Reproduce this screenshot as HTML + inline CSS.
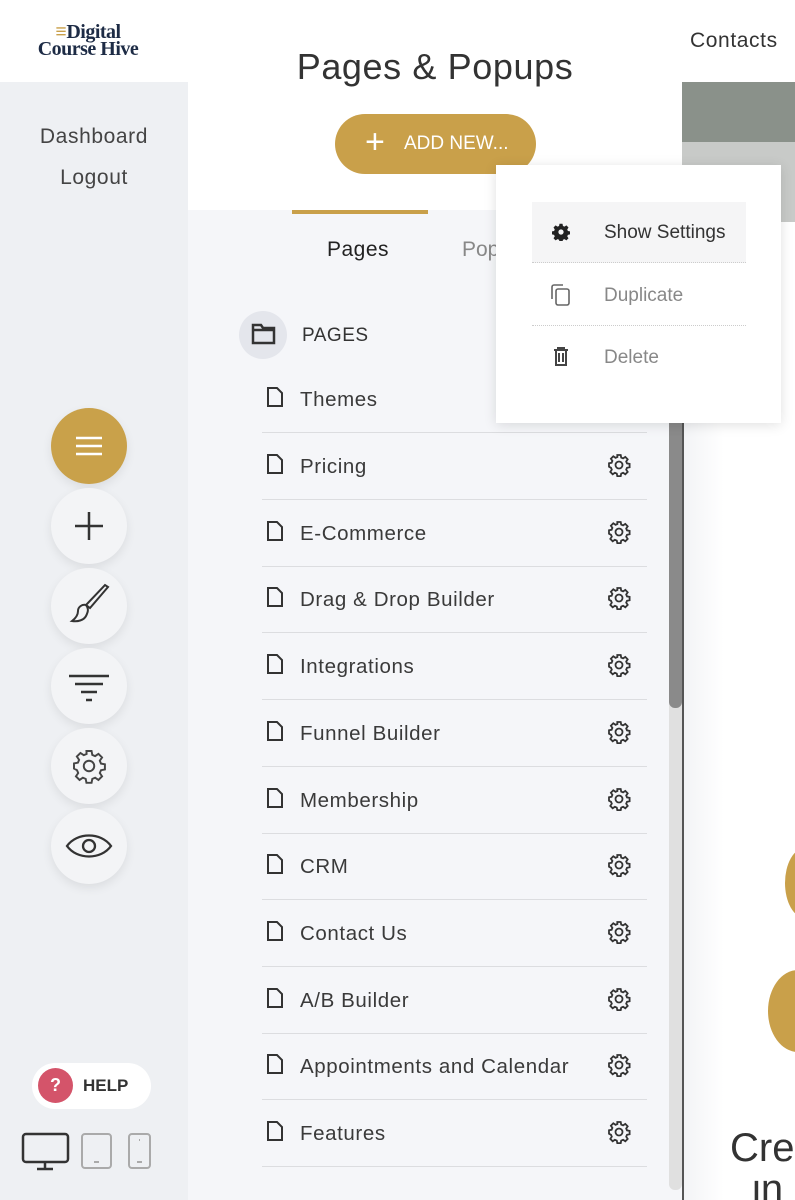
<!DOCTYPE html>
<html><head><style>
*{margin:0;padding:0;box-sizing:border-box}
html,body{width:795px;height:1200px;overflow:hidden}
body{position:relative;background:#fff;font-family:"Liberation Sans",sans-serif;color:#333}
.a{position:absolute}
.row{position:absolute;left:262px;width:385px;height:67px;border-bottom:1px solid #dcdde0}
.row span{position:absolute;left:38px;top:22px;font-size:20.5px;letter-spacing:0.6px;color:#3a3a3a}
.row .doc{position:absolute;left:4px;top:21px}
.row .g{position:absolute;left:345px;top:20px}
.circ{position:absolute;left:51px;width:76px;height:76px;border-radius:50%;background:#f3f4f6;box-shadow:0 4px 10px rgba(0,0,0,.08);display:flex;align-items:center;justify-content:center}
</style></head><body>
<div class="a" style="left:0;top:0;width:188px;height:82px;background:#fff"></div>
<div class="a" style="left:0;top:82px;width:188px;height:1118px;background:#eef0f3"></div>
<div class="a" style="left:26px;top:24px;width:124px;text-align:center;font-family:'Liberation Serif',serif;font-weight:bold;color:#1d2b45;font-size:20px;line-height:17px;letter-spacing:-0.5px"><span style="color:#c9a04a">≡</span>Digital<br>Course Hive</div>
<div class="a" style="left:0;top:116px;width:188px;text-align:center;font-size:21px;letter-spacing:0.6px;color:#444;line-height:41px">Dashboard<br>Logout</div>
<div class="circ" style="top:408px;background:#c9a14a"><svg width="30" height="24"><path d="M2 4h26M2 12h26M2 20h26" stroke="#fff" stroke-width="2.5"/></svg></div>
<div class="circ" style="top:488px"><svg width="32" height="32"><path d="M16 2v28M2 16h28" stroke="#333" stroke-width="2.5"/></svg></div>
<div class="circ" style="top:568px"><svg width="48" height="48" viewBox="0 0 48 48" fill="none" stroke="#333" stroke-width="2"><path d="M43 5 25 26l-4-3L40 3z"/><path d="M21 23c-4-1-8 2-8 6s-2 7-6 10c6 1 12-1 14-5s3-7 0-11"/></svg></div>
<div class="circ" style="top:648px"><svg width="44" height="32"><path d="M2 6h40M8 14h28M14 22h16M19 30h6" stroke="#333" stroke-width="2.5"/></svg></div>
<div class="circ" style="top:728px"><svg width="36" height="36" viewBox="0 0 24 24" fill="none" stroke="#444" stroke-width="1.3"><circle cx="12" cy="12" r="3.5"/><path d="M10.3 2h3.4l.5 2.6 1.9.8 2.2-1.5 2.4 2.4-1.5 2.2.8 1.9 2.6.5v3.4l-2.6.5-.8 1.9 1.5 2.2-2.4 2.4-2.2-1.5-1.9.8-.5 2.6h-3.4l-.5-2.6-1.9-.8-2.2 1.5-2.4-2.4 1.5-2.2-.8-1.9L2 13.7v-3.4l2.6-.5.8-1.9-1.5-2.2 2.4-2.4 2.2 1.5 1.9-.8z"/></svg></div>
<div class="circ" style="top:808px"><svg width="48" height="30" viewBox="0 0 48 30" fill="none" stroke="#333" stroke-width="2.3"><path d="M2 15C12 1 36 1 46 15 36 29 12 29 2 15z"/><circle cx="24" cy="15" r="6"/></svg></div>
<div class="a" style="left:32px;top:1063px;width:119px;height:46px;border-radius:23px;background:#fff"></div>
<div class="a" style="left:38px;top:1068px;width:35px;height:35px;border-radius:50%;background:#d4546a;color:#fff;font-weight:bold;font-size:18px;text-align:center;line-height:35px">?</div>
<div class="a" style="left:83px;top:1076px;font-weight:bold;font-size:17px;color:#333">HELP</div>
<svg class="a" style="left:20px;top:1132px" width="135" height="40" fill="none"><rect x="3" y="2" width="45" height="28" rx="3" stroke="#333" stroke-width="2.5"/><path d="M25 30v6M17 37h16" stroke="#333" stroke-width="2.5"/><rect x="62" y="2" width="29" height="34" rx="3" stroke="#aaa" stroke-width="2"/><path d="M74 30h5" stroke="#aaa" stroke-width="2"/><rect x="109" y="2" width="21" height="34" rx="3" stroke="#aaa" stroke-width="2"/><path d="M117 30h5M119 8h1" stroke="#aaa" stroke-width="2"/></svg>

<div class="a" style="left:188px;top:0;width:494px;height:210px;background:#fff"></div>
<div class="a" style="left:188px;top:210px;width:494px;height:990px;background:#f5f6f9"></div>
<div class="a" style="left:188px;top:46px;width:494px;text-align:center;font-size:36px;letter-spacing:0.6px;color:#333">Pages &amp; Popups</div>
<div class="a" style="left:335px;top:114px;width:201px;height:60px;border-radius:30px;background:#c9a04a;color:#fff;font-size:19px;line-height:60px"><span style="font-size:34px;position:absolute;left:30px;top:-2px">+</span><span style="position:absolute;left:69px">ADD NEW...</span></div>
<div class="a" style="left:292px;top:210px;width:136px;height:4px;background:#c9a04a"></div>
<div class="a" style="left:327px;top:238px;font-size:21px;letter-spacing:0.5px;color:#222">Pages</div>
<div class="a" style="left:462px;top:238px;font-size:21px;color:#888">Pop</div>
<div class="a" style="left:239px;top:311px;width:48px;height:48px;border-radius:50%;background:#e4e6ec"></div>
<svg class="a" style="left:251px;top:323px" width="25" height="22" fill="none" stroke="#333" stroke-width="2.5"><path d="M2 2h8l2 3h11v15H2z"/><path d="M2 7h21"/></svg>
<div class="a" style="left:302px;top:325px;font-size:19px;letter-spacing:0.5px;color:#333">PAGES</div>

<div class="row" style="top:366px"><svg class="doc" width="18" height="20" fill="none" stroke="#333" stroke-width="2"><path d="M2 1h9l5 5v13H2z"/></svg><span>Themes</span></div>
<div id="rows"></div>
<script>
var n=["Pricing","E-Commerce","Drag & Drop Builder","Integrations","Funnel Builder","Membership","CRM","Contact Us","A/B Builder","Appointments and Calendar","Features"];
var h="";n.forEach(function(t,i){var y=433+i*66.7;h+='<div class="row" style="top:'+y+'px"><svg class="doc" width="18" height="20" fill="none" stroke="#333" stroke-width="2"><path d="M2 1h9l5 5v13H2z"/></svg><span>'+t.replace("&","&amp;")+'</span><svg class="g" width="24" height="24" viewBox="0 0 24 24" fill="none" stroke="#333" stroke-width="1.8"><circle cx="12" cy="12" r="3.5"/><path d="M10.3 2h3.4l.5 2.6 1.9.8 2.2-1.5 2.4 2.4-1.5 2.2.8 1.9 2.6.5v3.4l-2.6.5-.8 1.9 1.5 2.2-2.4 2.4-2.2-1.5-1.9.8-.5 2.6h-3.4l-.5-2.6-1.9-.8-2.2 1.5-2.4-2.4 1.5-2.2-.8-1.9L2 13.7v-3.4l2.6-.5.8-1.9-1.5-2.2 2.4-2.4 2.2 1.5 1.9-.8z"/></svg></div>'});
document.getElementById("rows").innerHTML=h;
</script>
<div class="a" style="left:669px;top:410px;width:13px;height:780px;background:#e0e0e0;border-radius:6px"></div>
<div class="a" style="left:669px;top:405px;width:13px;height:303px;background:#8a8a8a;border-radius:0 0 6px 6px"></div>
<div class="a" style="left:682px;top:400px;width:2px;height:800px;background:#555"></div>

<div class="a" style="left:684px;top:0;width:111px;height:82px;background:#fff"></div>
<div class="a" style="left:690px;top:29px;font-size:21px;letter-spacing:0.6px;color:#333">Contacts</div>
<div class="a" style="left:682px;top:82px;width:113px;height:60px;background:#8a918a"></div>
<div class="a" style="left:682px;top:142px;width:113px;height:80px;background:#c8cac8"></div>
<div class="a" style="left:684px;top:400px;width:111px;height:800px;background:linear-gradient(90deg,#f3f4f6,#fff 40px)"></div>
<div class="a" style="left:785px;top:848px;width:40px;height:70px;border-radius:50%;background:#c9a04a"></div>
<div class="a" style="left:768px;top:970px;width:60px;height:82px;border-radius:50%;background:#c9a04a"></div>
<div class="a" style="left:730px;top:1126px;font-size:40px;color:#333">Cre</div>
<div class="a" style="left:752px;top:1178px;font-size:40px;color:#333;line-height:22px;height:22px;overflow:hidden">in</div>

<div class="a" style="left:496px;top:165px;width:285px;height:258px;background:#fff;box-shadow:0 2px 12px rgba(0,0,0,.12)"></div>
<div class="a" style="left:532px;top:202px;width:214px;height:61px;background:#f5f5f6;border-bottom:1px dotted #ccc"></div>
<div class="a" style="left:532px;top:325px;width:214px;border-bottom:1px dotted #ccc"></div>
<svg class="a" style="left:552px;top:223px" width="18" height="18" viewBox="0 0 24 24"><path fill="#222" d="M10 1h4l.6 3 2 .9 2.6-1.7 2.8 2.8-1.7 2.6.9 2 3 .6v4l-3 .6-.9 2 1.7 2.6-2.8 2.8-2.6-1.7-2 .9-.6 3h-4l-.6-3-2-.9-2.6 1.7-2.8-2.8 1.7-2.6-.9-2-3-.6v-4l3-.6.9-2-1.7-2.6 2.8-2.8 2.6 1.7 2-.9z"/><circle cx="12" cy="12" r="3.5" fill="#f5f5f6"/></svg>
<div class="a" style="left:604px;top:222px;font-size:19px;color:#333">Show Settings</div>
<svg class="a" style="left:550px;top:284px" width="22" height="22" fill="none" stroke="#666" stroke-width="1.6"><path d="M2 15V3a2 2 0 0 1 2-2h9"/><rect x="6" y="5" width="13" height="16" rx="2"/></svg>
<div class="a" style="left:604px;top:285px;font-size:19px;color:#888">Duplicate</div>
<svg class="a" style="left:553px;top:347px" width="16" height="19" fill="none" stroke="#444" stroke-width="2"><path d="M1 3h14M5 3V1h6v2M3 3v15h10V3M6 6v9M10 6v9"/></svg>
<div class="a" style="left:604px;top:347px;font-size:19px;color:#888">Delete</div>
</body></html>
